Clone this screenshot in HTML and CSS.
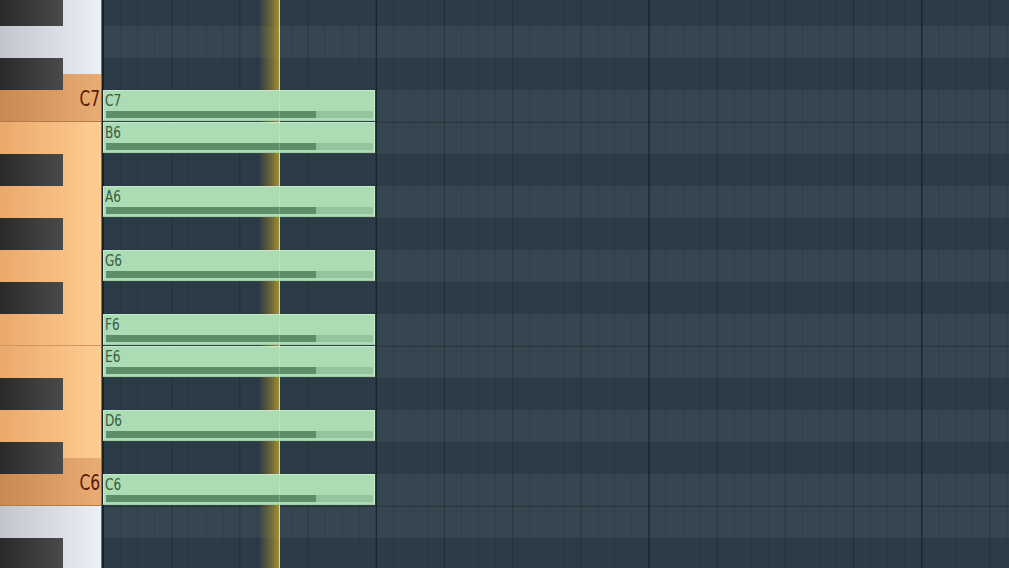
FILE: index.html
```html
<!DOCTYPE html>
<html lang="en">
<head>
    <meta charset="UTF-8">
    <title>Piano Roll</title>
    <link rel="stylesheet" href="styles.css">
</head>
<body>

<div class="roll">
    <!-- Keyboard on the left -->
    <div class="keys">
        <div class="whites">
            <div class="key k48"></div>
            <div class="key k64"></div>
            <div class="key k48 lit tonic"><span class="label">C7</span></div>
            <div class="key k48 lit"></div>
            <div class="key k64 lit"></div>
            <div class="key k64 lit"></div>
            <div class="key k48 lit edge"></div>
            <div class="key k48 lit"></div>
            <div class="key k64 lit"></div>
            <div class="key k48 lit tonic"><span class="label">C6</span></div>
            <div class="key k48"></div>
            <div class="key k64"></div>
        </div>
        <div class="blacks">
            <div class="slot sharp"></div>
            <div class="slot"></div>
            <div class="slot sharp"></div>
            <div class="slot"></div>
            <div class="slot"></div>
            <div class="slot sharp"></div>
            <div class="slot"></div>
            <div class="slot sharp"></div>
            <div class="slot"></div>
            <div class="slot sharp"></div>
            <div class="slot"></div>
            <div class="slot"></div>
            <div class="slot sharp"></div>
            <div class="slot"></div>
            <div class="slot sharp"></div>
            <div class="slot"></div>
            <div class="slot"></div>
            <div class="slot sharp"></div>
        </div>
    </div>

    <!-- Note grid -->
    <div class="grid">
        <div class="rows">
            <div class="row dark"></div>
            <div class="row"></div>
            <div class="row dark"></div>
            <div class="row"><div class="note"><span>C7</span><div class="vel"></div></div></div>
            <div class="row split"><div class="note"><span>B6</span><div class="vel"></div></div></div>
            <div class="row dark"></div>
            <div class="row"><div class="note"><span>A6</span><div class="vel"></div></div></div>
            <div class="row dark"></div>
            <div class="row"><div class="note"><span>G6</span><div class="vel"></div></div></div>
            <div class="row dark"></div>
            <div class="row"><div class="note"><span>F6</span><div class="vel"></div></div></div>
            <div class="row split"><div class="note"><span>E6</span><div class="vel"></div></div></div>
            <div class="row dark"></div>
            <div class="row"><div class="note"><span>D6</span><div class="vel"></div></div></div>
            <div class="row dark"></div>
            <div class="row"><div class="note"><span>C6</span><div class="vel"></div></div></div>
            <div class="row split"></div>
            <div class="row dark"></div>
        </div>
        <div class="playhead"></div>
        <div class="playhead-hi"></div>
    </div>
</div>

</body>
</html>
```

FILE: styles.css
```css
/* Page */
body {
    margin: 0;
    width: 1009px;
    height: 568px;
    overflow: hidden;
    background: #2c3c47;
    font-family: 'DejaVu Sans Condensed', 'DejaVu Sans', sans-serif;
}

.roll {
    display: flex;
    height: 568px;
    overflow: hidden;
}

/* Keyboard */
.keys {
    position: relative;
    flex: none;
    width: 101px;
    border-right: 1px solid #6b7880;
    overflow: hidden;
}

.whites {
    margin-top: -38px;
}

.key {
    box-sizing: border-box;
    background: linear-gradient(90deg, #c2c5cd, #eceff7);
}

.k48 { height: 48px; }
.k64 { height: 64px; }

.key.lit {
    background: linear-gradient(90deg, #eba96b, #ffcd91);
}

.key.edge {
    border-bottom: 1px solid #cf9563;
}

.key.tonic {
    background: linear-gradient(90deg, #c98950, #e9ad73);
    border-bottom: 1px solid #b57a48;
    text-align: right;
    padding: 14px 1px 0 0;
}

.label {
    display: inline-block;
    font-size: 21px;
    line-height: 22px;
    color: #5a1a08;
    transform: scaleX(0.82);
    transform-origin: right center;
}

.blacks {
    position: absolute;
    top: -6px;
    left: 0;
    width: 63px;
    display: flex;
    flex-direction: column;
}

.slot {
    height: 32px;
    flex: none;
}

.slot.sharp {
    background: linear-gradient(90deg, #2a2a2b, #4a4a4b);
}

/* Grid */
.grid {
    position: relative;
    flex: 1;
    border-left: 1px solid #18232b;
    overflow: hidden;
}

.rows {
    margin-top: -6px;
}

.row {
    height: 32px;
    background-color: #354650;
    background-image:
        linear-gradient(90deg, #15212a 0 1px, transparent 1px),
        linear-gradient(90deg, rgba(0, 0, 0, 0.13) 0 1px, transparent 1px),
        linear-gradient(90deg, rgba(0, 0, 0, 0.1) 0 1px, transparent 1px),
        linear-gradient(180deg, transparent 31px, rgba(0, 0, 0, 0.06) 31px);
    background-size: 272.8px 100%, 68.2px 100%, 17.05px 100%, 100% 100%;
}

.row.dark {
    background-color: #2c3c47;
}

.row.split {
    box-shadow: inset 0 1px 0 rgba(0, 0, 0, 0.22);
}

/* Notes */
.note {
    position: relative;
    z-index: 2;
    box-sizing: border-box;
    width: 272px;
    height: 31px;
    background: #abdcb4;
    border: 1px solid #c2eac8;
    border-bottom-color: #9ccda5;
    padding: 1px 0 0 1px;
}

.note span {
    display: block;
    font-size: 16px;
    line-height: 17px;
    color: #3b5a43;
    transform: scaleX(0.84);
    transform-origin: left center;
}

.vel {
    margin: 2px 1px 0 1px;
    height: 7px;
    background: linear-gradient(90deg, #5e8d68 0 210px, #95c39e 210px);
}

/* Playhead */
.playhead {
    position: absolute;
    z-index: 1;
    top: 0;
    bottom: 0;
    left: 156px;
    width: 21px;
    background: linear-gradient(90deg, rgba(150, 130, 40, 0), rgba(170, 145, 40, 0.5) 12px, rgba(200, 170, 40, 0.75) 20px, #f5cb38 20px);
}

.playhead-hi {
    position: absolute;
    z-index: 3;
    top: 0;
    bottom: 0;
    left: 176px;
    width: 1px;
    background: rgba(255, 255, 255, 0.22);
}
```
